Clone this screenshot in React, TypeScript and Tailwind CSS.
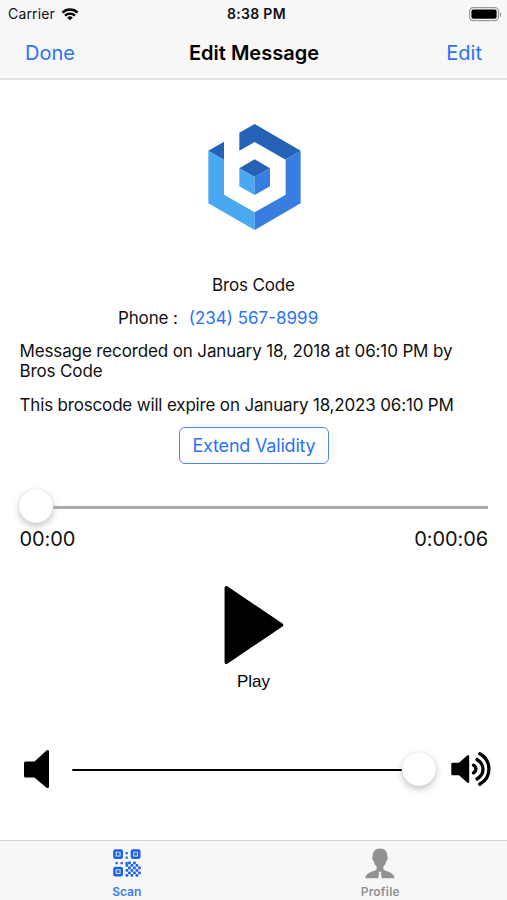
import React from "react";

const WifiIcon = () => (
  <svg width="18" height="13" viewBox="0 0 18 13" fill="none" stroke="#000" strokeWidth="2.4">
    <path d="M1.4 4.6a10.8 10.8 0 0 1 15.2 0" />
    <path d="M4 7.7a7 7 0 0 1 10 0" />
    <path d="M9 12.3 6.2 9.7a4 4 0 0 1 5.6 0Z" fill="#000" stroke="none" />
  </svg>
);

const BatteryIcon = () => (
  <svg width="33" height="15" viewBox="0 0 33 15">
    <rect x="0.6" y="0.6" width="28.8" height="13" rx="3.6" fill="#f7f7f7" stroke="#999" strokeWidth="1.2" />
    <rect x="2.4" y="2.4" width="25.2" height="9.4" rx="2" fill="#000" />
    <path d="M30.8 5v5c1.6-.6 1.6-4.4 0-5Z" fill="#888" />
  </svg>
);

const Logo = () => (
  <svg width="130" height="130" viewBox="0 0 390 390">
    <path d="M55 122 102 95V150Z" fill="#2561b6" />
    <path d="M148 68 194 42 332 122 287 149 194 96 148 122Z" fill="#2561b6" />
    <path d="M55 122 102 149V254L194 307V360L55 280Z" fill="#4aa8f0" />
    <path d="M332 122V280L194 360V307L287 254V149Z" fill="#377ee0" />
    <path d="M194 148 240 175 194 201 148 175Z" fill="#2561b6" />
    <path d="M148 175 194 201V255L148 229Z" fill="#4aa8f0" />
    <path d="M240 175 194 201V255L240 229Z" fill="#377ee0" />
  </svg>
);

const PlayIcon = () => (
  <svg width="64" height="82" viewBox="0 0 64 82">
    <path d="M4.3 3.8 59.5 41 4.3 78.2Z" stroke="#000" strokeWidth="3.5" strokeLinejoin="round" />
  </svg>
);

const SpeakerIcon = () => (
  <svg width="30" height="42" viewBox="0 0 30 42">
    <path d="M3.5 15h9.5L25.5 3.5v35L13 28h-9.5Z" stroke="#000" strokeWidth="3" strokeLinejoin="round" />
  </svg>
);

const LoudIcon = () => (
  <svg width="42" height="38" viewBox="0 0 42 38" fill="none" stroke="#000" strokeLinecap="round" strokeLinejoin="round">
    <path d="M2.5 14h7L18 6.3v25.4L9.5 24h-7Z" fill="#000" strokeWidth="2.4" />
    <path d="M23.5 15.2c3.2 2 3.2 5.6 0 7.6M27 9.5c8 5 8 14.5 0 19.5M29.8 3.8c12.2 7 12.2 23.4 0 30.4" strokeWidth="3.3" />
  </svg>
);

const dots = [
  [13.5, 4], [13.5, 8.5], [3.5, 14], [8.5, 14], [13.5, 14],
];

// lower right block of the code, drawn as a checkerboard
const checks = Array.from({ length: 36 }, (_, i) => [i % 6, Math.floor(i / 6)]).filter(
  ([x, y]) => (x + y) % 2 === 1 && !(x === 5 && y === 0)
);

const ScanIcon = () => (
  <svg width="28" height="28" viewBox="0 0 28 28">
    {[[0, 0], [17.5, 0], [0, 17.5]].map(([x, y]) => (
      <g key={`${x}-${y}`}>
        <rect x={x + 1.4} y={y + 1.4} width="7.4" height="7.4" rx="1" fill="#d3e2fb" stroke="#1d63ea" strokeWidth="2.5" />
        <rect x={x + 3.7} y={y + 3.7} width="2.8" height="2.8" fill="#1d63ea" />
      </g>
    ))}
    {dots.map(([x, y]) => (
      <rect key={`${x}-${y}`} x={x - 1} y={y - 1} width="2.3" height="2.3" rx="0.5" fill="#1d63ea" />
    ))}
    {checks.map(([x, y]) => (
      <rect key={`${x}-${y}`} x={12.5 + x * 2.5} y={12.5 + y * 2.5} width="2.8" height="2.8" rx="0.8" fill="#1d63ea" />
    ))}
  </svg>
);

const ProfileIcon = () => (
  <svg width="30" height="31" viewBox="0 0 30 31" fill="#919191">
    <path d="M15 0.5c-5 0-7.6 3.3-7.300 8-.9.6-.4 3.600.9 4.500.5 2.600 1.700 4.300 3 5.500v3C9 24 .9 23.500.4 30.300h12.800l1-5-1-1.600h3.600l-1 1.600 1 5h12.800C29.100 23.500 21 24 18.400 21.500v-3c1.300-1.200 2.500-2.900 3-5.500 1.300-.9 1.800-3.900.9-4.500.3-4.700-2.300-8-7.300-8Z" />
  </svg>
);

const Knob = () => (
  <div className="h-[34px] w-[34px] shrink-0 rounded-full bg-white shadow-[0_3px_7px_rgba(0,0,0,0.24),0_0_1px_rgba(0,0,0,0.15)]" />
);

const App = () => {
  return (
    <div className="flex h-[900px] w-[507px] flex-col overflow-hidden bg-white font-['Inter','Liberation_Sans',sans-serif] text-[#111]">
      <header className="h-20 border-b-2 border-[#e2e2e2] bg-[#f7f7f7]">
        <div className="grid h-7 grid-cols-3 items-center pr-[5px] pl-2 text-sm leading-none">
          <div className="flex items-center gap-[6px]">
            <span className="tracking-[0.15px]">Carrier</span>
            <WifiIcon />
          </div>
          <span className="pl-[3px] text-center font-semibold tracking-[0.3px] whitespace-nowrap">8:38 PM</span>
          <div className="flex justify-end">
            <BatteryIcon />
          </div>
        </div>
        <div className="grid h-12 grid-cols-3 items-center px-[25px] pt-px text-xl">
          <button className="text-left text-[#2b73f3]">Done</button>
          <h1 className="pl-px text-center font-semibold whitespace-nowrap text-black">Edit Message</h1>
          <button className="text-right text-[#2b73f3]">Edit</button>
        </div>
      </header>

      <main className="flex flex-1 flex-col text-[17px] leading-5 tracking-[-0.15px]">
        <div className="mt-[30px] flex justify-center pl-[3px]">
          <Logo />
        </div>
        <p className="mt-[35px] text-center">Bros Code</p>
        <p className="mt-[13px] flex gap-[11px] pl-[118px]">
          <span>Phone :</span>
          <span className="tracking-normal text-[#2b73f3]">(234) 567-8999</span>
        </p>
        <p className="mt-[13px] pr-5 pl-[19.5px] tracking-[-0.13px] whitespace-nowrap">
          Message recorded on January 18, 2018 at 06:10 PM by
          <br />
          Bros Code
        </p>
        <p className="mt-[13.5px] pr-5 pl-[19.5px] tracking-[-0.17px] whitespace-nowrap">
          This broscode will expire on January 18,2023 06:10 PM
        </p>
        <button className="mt-[12.5px] ml-[179px] h-[37px] w-[150px] rounded-md border-[1.5px] border-[#4c88f2] pt-px text-lg leading-none tracking-[-0.2px] whitespace-nowrap text-[#2b73f3]">
          Extend Validity
        </button>

        <div className="mt-[25px] flex items-center pr-[19px] pl-[18.5px]">
          <Knob />
          <div className="mt-0.5 h-[3px] flex-1 bg-[#ababab]" />
        </div>
        <div className="mt-1 flex justify-between pr-[19px] pl-[19.5px] text-xl leading-6 tracking-[-0.1px]">
          <span>00:00</span>
          <span>0:00:06</span>
        </div>

        <div className="mt-[33px] flex flex-col items-center">
          <PlayIcon />
          <span className="mt-1.5 font-['Liberation_Sans',sans-serif] tracking-normal text-black">Play</span>
        </div>

        <div className="mt-14 flex items-center pr-[15px] pl-[22px]">
          <SpeakerIcon />
          <div className="mt-0.5 ml-5 h-[2.5px] flex-1 rounded-full bg-black" />
          <Knob />
          <div className="ml-[14px]">
            <LoudIcon />
          </div>
        </div>
      </main>

      <nav className="grid h-[60px] grid-cols-2 border-t border-[#d5d5d5] bg-[#f7f7f7] text-[12px] leading-none font-semibold">
        <div className="flex flex-col items-center pt-2 text-[#3c7bee]">
          <ScanIcon />
          <span className="mt-[9px]">Scan</span>
        </div>
        <div className="flex flex-col items-center pt-[7px] text-[#919191]">
          <ProfileIcon />
          <span className="mt-[7px] tracking-[0.2px]">Profile</span>
        </div>
      </nav>
    </div>
  );
};

export default App;
